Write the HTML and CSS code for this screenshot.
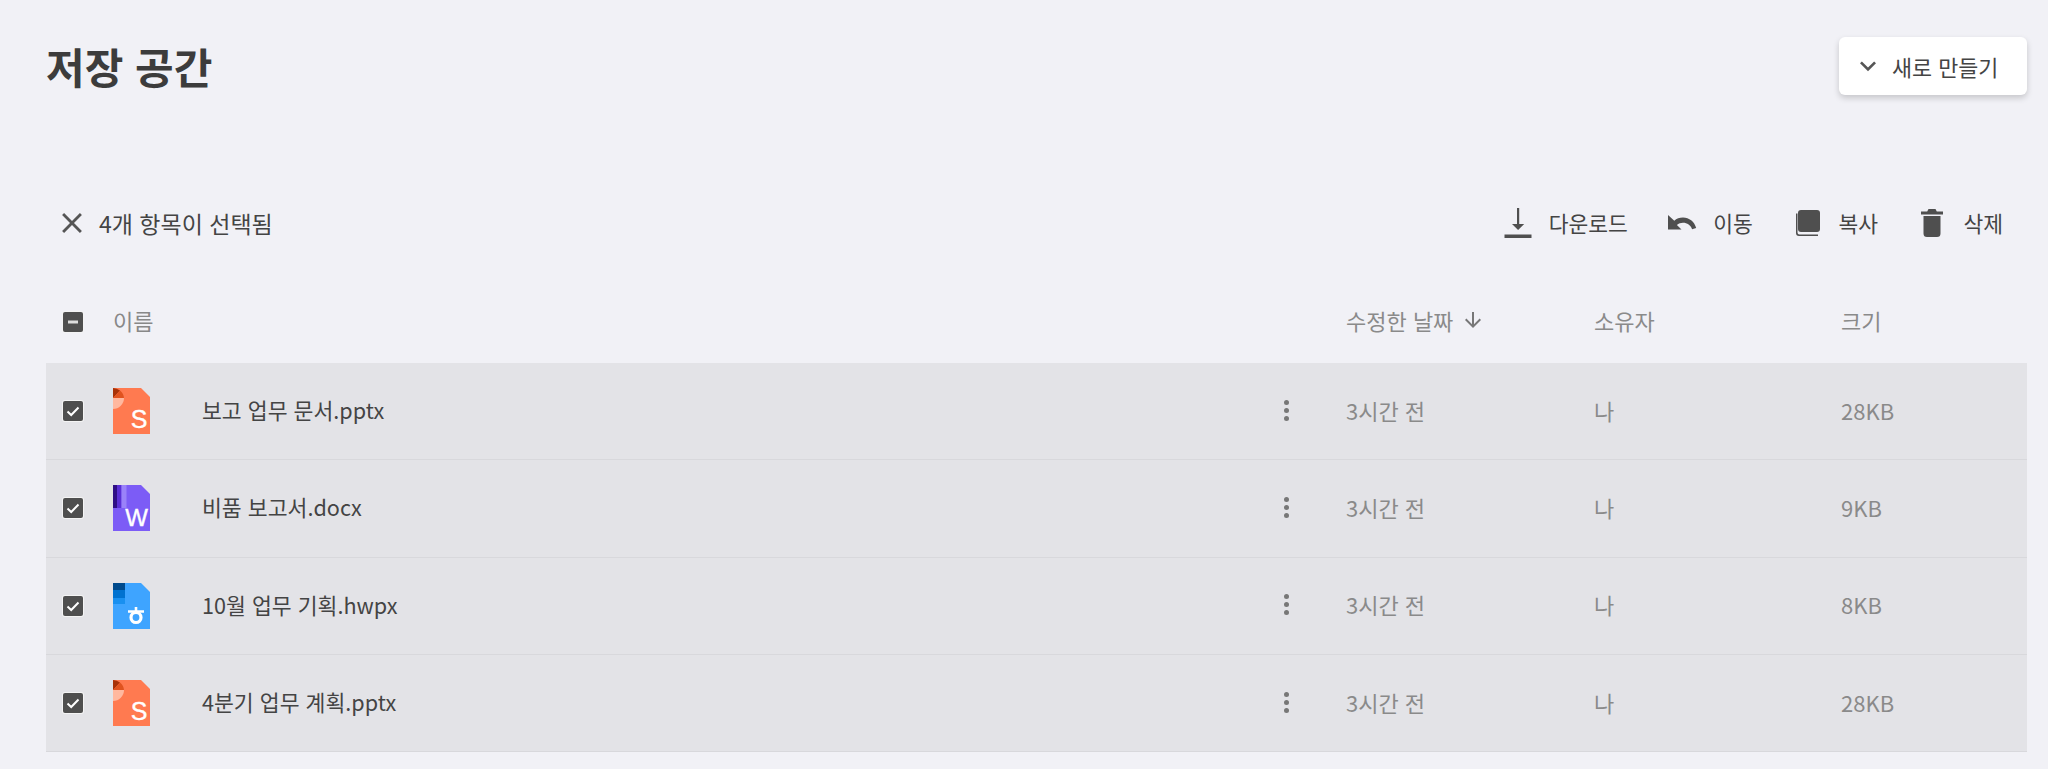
FILE: index.html
```html
<!DOCTYPE html>
<html lang="ko">
<head>
<meta charset="utf-8">
<title>저장 공간</title>
<link rel="stylesheet" href="styles.css">
</head>
<body>
<main class="page">
  <header class="top">
    <h1 class="title">저장 공간</h1>
    <button class="new-btn">
      <svg class="ic-chev" viewBox="0 0 24 24"><path d="M7.410 8.590 12 13.170l4.590-4.580L18 10l-6 6-6-6z"/></svg>
      <span>새로 만들기</span>
    </button>
  </header>
  <section class="selbar">
    <div class="sel-left">
      <svg class="ic-close" viewBox="0 0 24 24"><path d="M19 6.410 17.590 5 12 10.590 6.410 5 5 6.410 10.590 12 5 17.590 6.410 19 12 13.410 17.590 19 19 17.590 13.410 12z"/></svg>
      <span>4개 항목이 선택됨</span>
    </div>
    <div class="sel-actions">
      <div class="action">
        <svg class="ic" viewBox="0 0 30 30"><path d="M14 0h2.200v16h5l-6.100 6-6.100-6h5zM1.500 26.500h27V30h-27z"/></svg>
        <span>다운로드</span>
      </div>
      <div class="action">
        <svg class="ic" viewBox="0 0 30 30"><path d="M16 9.500c-3.500 0-6.500 1.200-8.700 3.200L1 7v14.500h13.500l-4.600-4.600c1.700-1.400 3.800-2.200 6.100-2.200 4.200 0 7.800 2.600 9.100 6.500l4.100-1.300C27.300 13.600 22.200 9.500 16 9.500z"/></svg>
        <span>이동</span>
      </div>
      <div class="action">
        <svg class="ic" viewBox="0 0 30 30"><path d="M9 2h16a3 3 0 0 1 3 3v16a3 3 0 0 1-3 3H9a3 3 0 0 1-3-3V5a3 3 0 0 1 3-3z"/><path d="M4 5.500V25a3 3 0 0 0 3 3h19v-1.600H7.500a2 2 0 0 1-2-2V5.500z"/></svg>
        <span>복사</span>
      </div>
      <div class="action">
        <svg class="ic" viewBox="0 0 30 30"><path d="M6.500 25.500A3.500 3.500 0 0 0 10 29h10a3.500 3.500 0 0 0 3.500-3.500V8h-17zM26 3.500h-6.200L18.500 1h-7l-1.300 2.500H4V6.500h22z"/></svg>
        <span>삭제</span>
      </div>
    </div>
  </section>
  <div class="table">
    <div class="row head">
      <div class="c-check"><span class="box"><svg viewBox="0 0 20 20"><path d="M5 8.500h10v3H5z"/></svg></span></div>
      <div class="c-name">이름</div>
      <div class="c-date">수정한 날짜 <svg class="ic-sort" viewBox="0 0 24 24"><path d="m20 12-1.410-1.410L13 16.170V4h-2v12.170l-5.580-5.590L4 12l8 8z"/></svg></div>
      <div class="c-owner">소유자</div>
      <div class="c-size">크기</div>
    </div>

    <div class="row item">
      <div class="c-check"><span class="box"><svg viewBox="0 0 20 20"><path d="m4.500 10.500 3.700 3.500 7.300-7.500"/></svg></span></div>
      <svg class="file" viewBox="0 0 37 46"><path fill="#ff7a50" d="M0 0h28l9 9v37H0z"/><path fill="#a83208" d="M0 0a11 11 0 0 1 7 2.500L0 10z"/><path fill="#e0531f" d="M7 2.500A11 11 0 0 1 11 10H0z"/><path fill="#ffb89f" d="M0 10h11a11 11 0 0 1-11 11z"/><text x="26" y="40" class="file-letter" text-anchor="middle">S</text></svg>
      <div class="c-file">보고 업무 문서.pptx</div>
      <div class="c-menu"><i></i><i></i><i></i></div>
      <div class="c-date">3시간 전</div>
      <div class="c-owner">나</div>
      <div class="c-size">28KB</div>
    </div>

    <div class="row item">
      <div class="c-check"><span class="box"><svg viewBox="0 0 20 20"><path d="m4.500 10.500 3.700 3.500 7.300-7.500"/></svg></span></div>
      <svg class="file" viewBox="0 0 37 46"><path fill="#7c5cf6" d="M0 0h28l9 9v37H0z"/><path fill="#2f0f86" d="M0 0h4v23H0z"/><path fill="#5a2fd6" d="M4 0h4.500v23H4z"/><path fill="#9a82f9" d="M8.500 0h5v23h-5z"/><text x="23.500" y="41" class="file-letter w" text-anchor="middle">W</text></svg>
      <div class="c-file">비품 보고서.docx</div>
      <div class="c-menu"><i></i><i></i><i></i></div>
      <div class="c-date">3시간 전</div>
      <div class="c-owner">나</div>
      <div class="c-size">9KB</div>
    </div>

    <div class="row item">
      <div class="c-check"><span class="box"><svg viewBox="0 0 20 20"><path d="m4.500 10.500 3.700 3.500 7.300-7.500"/></svg></span></div>
      <svg class="file" viewBox="0 0 37 46"><path fill="#3ea4ff" d="M0 0h28l9 9v37H0z"/><path fill="#004a8c" d="M0 0h12v7H0z"/><path fill="#0072d0" d="M0 7h12v8H0z"/><path fill="#1990f0" d="M0 15h12v6H0z"/><path fill="none" stroke="#fff" stroke-width="2.600" d="M15 28.500h16M23 24v4"/><circle cx="23" cy="34.500" r="5" fill="none" stroke="#fff" stroke-width="3.200"/></svg>
      <div class="c-file">10월 업무 기획.hwpx</div>
      <div class="c-menu"><i></i><i></i><i></i></div>
      <div class="c-date">3시간 전</div>
      <div class="c-owner">나</div>
      <div class="c-size">8KB</div>
    </div>

    <div class="row item">
      <div class="c-check"><span class="box"><svg viewBox="0 0 20 20"><path d="m4.500 10.500 3.700 3.500 7.300-7.500"/></svg></span></div>
      <svg class="file" viewBox="0 0 37 46"><path fill="#ff7a50" d="M0 0h28l9 9v37H0z"/><path fill="#a83208" d="M0 0a11 11 0 0 1 7 2.500L0 10z"/><path fill="#e0531f" d="M7 2.500A11 11 0 0 1 11 10H0z"/><path fill="#ffb89f" d="M0 10h11a11 11 0 0 1-11 11z"/><text x="26" y="40" class="file-letter" text-anchor="middle">S</text></svg>
      <div class="c-file">4분기 업무 계획.pptx</div>
      <div class="c-menu"><i></i><i></i><i></i></div>
      <div class="c-date">3시간 전</div>
      <div class="c-owner">나</div>
      <div class="c-size">28KB</div>
    </div>
  </div>
</main>
</body>
</html>
```
FILE: styles.css
```css
* { box-sizing: border-box; }
html, body { margin: 0; height: 100%; }
body {
  background: #f1f1f6;
  color: #444;
  font-family: "Noto Sans CJK KR", "Noto Sans", sans-serif;
  font-size: 22px;
  overflow: hidden;
}
.page { padding: 37px 21px 0 46px; }
.top { display: flex; justify-content: space-between; align-items: flex-start; height: 143px; }
.title { margin: 0; font-size: 42px; line-height: 58px; font-weight: 700; color: #3c3c3c; }
.new-btn {
  display: flex; align-items: center; gap: 8px;
  width: 188px; height: 58px; padding: 0 0 0 13px;
  border: 0; border-radius: 6px; background: #fff;
  box-shadow: 0 3px 6px rgba(0,0,0,.18);
  font: inherit; font-size: 21.8px; color: #444;
}
.ic-chev { width: 32px; height: 32px; fill: #555; }
.selbar { display: flex; justify-content: space-between; align-items: center; height: 87px; padding: 0 24px 2px 12px; }
.sel-left { display: flex; align-items: center; gap: 10px; font-size: 23px; }
.ic-close { width: 34px; height: 34px; fill: #555; margin-left: -3px; }
.sel-actions { display: flex; align-items: center; gap: 39.5px; }
.action { display: flex; align-items: center; gap: 16px; font-size: 21.5px; }
.ic { width: 30px; height: 30px; fill: #4f4f4f; }
.row { display: grid; grid-template-columns: 67px 89px 1055px 89px 248px 247px 186px; align-items: center; }
.head { height: 96px; padding-top: 14px; color: #888; }
.head .c-name { grid-column: 2 / 5; }
.head .c-name, .head .c-date, .head .c-owner, .head .c-size { padding-bottom: 4px; }
.item { height: 97.3px; background: #e3e3e7; border-bottom: 1px solid #d8d8dc; }
.item .c-file, .item .c-date, .item .c-owner, .item .c-size { padding-bottom: 3px; }
.c-check { padding-left: 17px; display: flex; }
.box { width: 20px; height: 20px; border-radius: 2px; background: #4f4f4f; display: block; box-shadow: 0 0 0 1px #f4f4f4; }
.box svg { display: block; width: 20px; height: 20px; fill: #ddd; stroke: #fff; stroke-width: 2; }
.head .box svg { stroke: none; }
.item .box svg { fill: none; }
.file { width: 37px; height: 46px; overflow: visible; }
.file-letter { font: 400 25px "Liberation Sans", sans-serif; fill: #fff; stroke: #fff; stroke-width: .4; }
.file-letter.w { font-size: 24px; }
.c-file { color: #444; font-size: 21.6px; }
.c-menu { display: flex; flex-direction: column; gap: 3px; align-items: center; width: 20px; margin: 0 0 2px 19px; }
.c-menu i { width: 5px; height: 5px; border-radius: 50%; background: #777; }
.c-date, .c-owner, .c-size { color: #8a8a8a; }
.head .c-date { display: flex; align-items: center; gap: 8px; }
.ic-sort { width: 24px; height: 24px; fill: #777; }
```
